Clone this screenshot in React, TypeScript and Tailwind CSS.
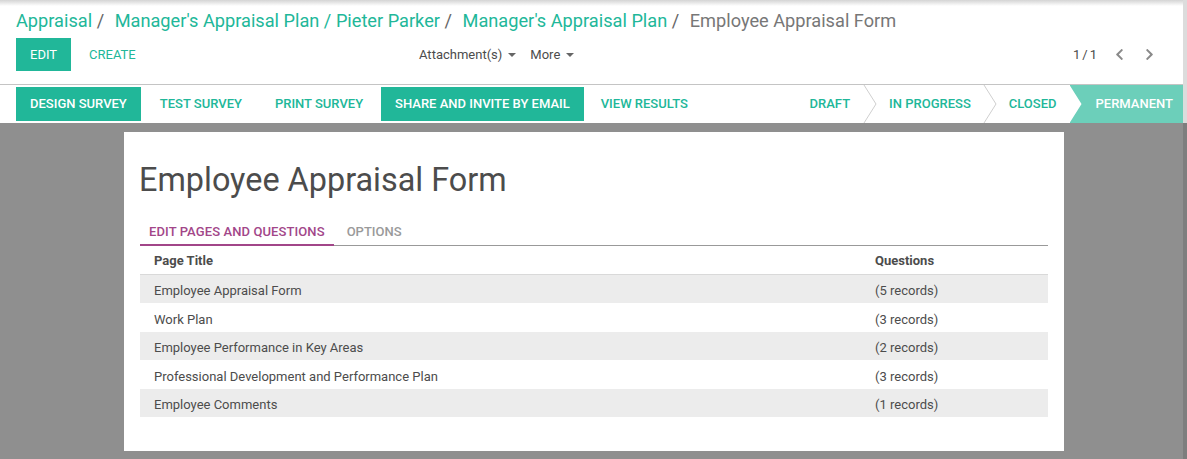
import { FaChevronLeft, FaChevronRight } from "react-icons/fa";

const rows = [
  { title: "Employee Appraisal Form", q: "(5 records)" },
  { title: "Work Plan", q: "(3 records)" },
  { title: "Employee Performance in Key Areas", q: "(2 records)" },
  { title: "Professional Development and Performance Plan", q: "(3 records)" },
  { title: "Employee Comments", q: "(1 records)" },
];

const Caret = () => <span className="inline-block ml-[6px] align-middle border-x-[4px] border-x-transparent border-t-[4px] border-t-[#666]" />;

const Sep = () => (
  <svg width="14" height="38" viewBox="0 0 14 38" className="shrink-0">
    <polyline points="1,0 13,19 1,38" fill="none" stroke="#cfcfcf" strokeWidth="1" />
  </svg>
);

const App = () => {
  return (
    <div className="flex w-[1187px] h-[459px] overflow-hidden bg-[#8f8f8f] font-['Roboto',sans-serif]">
      <div className="w-[1183px] shrink-0 flex flex-col">
        <div className="bg-white relative">
          <div className="absolute top-0 left-0 right-0 h-[6px] bg-gradient-to-b from-[#d4d4d4] to-white" />
          <div className="relative pt-[9px] pl-4 text-[18.2px] leading-[24px] whitespace-nowrap">
            <span className="text-[#21b799]">Appraisal</span>
            <span className="text-[#666]"> / </span>
            <span className="text-[#21b799] ml-[6px]">Manager's Appraisal Plan / Pieter Parker</span>
            <span className="text-[#666]"> / </span>
            <span className="text-[#21b799] ml-[6px]">Manager's Appraisal Plan</span>
            <span className="text-[#666]"> / </span>
            <span className="text-[#777] ml-[6px]">Employee Appraisal Form</span>
          </div>
          <div className="flex items-center h-[33px] mt-[5px] pl-4 pr-[27px] text-[13px]">
            <div className="w-[480px] flex items-center">
              <button className="bg-[#21b799] text-white h-[33px] px-[14px] uppercase">Edit</button>
              <button className="text-[#21b799] ml-[4px] px-[14px] uppercase">Create</button>
            </div>
            <div className="flex-1 flex items-center text-[#4c4c4c]">
              <span className="ml-[-77px]">Attachment(s)<Caret /></span>
              <span className="ml-[14px]">More<Caret /></span>
            </div>
            <div className="flex items-center text-[#4c4c4c]">
              <span>1<span className="mx-[2px]">/</span>1</span>
              <FaChevronLeft className="ml-[16px] text-[#8a8a8a]" size={13} />
              <FaChevronRight className="ml-[17px] text-[#8a8a8a]" size={13} />
            </div>
          </div>
          <div className="h-[13px]" />
        </div>
        <div className="bg-white border-t border-[#c4c4c4] h-[39px] flex items-stretch text-[13px] uppercase font-medium">
          <div className="flex items-center pl-4 gap-[4px] flex-1">
            <button className="bg-[#21b799] text-white h-[34px] px-[14px] uppercase">Design Survey</button>
            <button className="text-[#21b799] h-[34px] px-[15px] uppercase">Test Survey</button>
            <button className="text-[#21b799] h-[34px] px-[14px] uppercase">Print Survey</button>
            <button className="bg-[#21b799] text-white h-[34px] px-[14px] uppercase">Share and invite by email</button>
            <button className="text-[#21b799] h-[34px] px-[13px] uppercase">View Results</button>
          </div>
          <div className="flex items-center text-[#21b799]">
            <span className="px-[13px]">Draft</span>
            <Sep />
            <span className="px-[12px]">In Progress</span>
            <Sep />
            <span className="px-[12px]">Closed</span>
            <div className="h-full flex items-center bg-[#6ccfba] text-white pl-[26px] pr-[10px] ml-[1px] [clip-path:polygon(0_0,100%_0,100%_100%,0_100%,12px_50%)]">
              Permanent
            </div>
          </div>
        </div>
        <div className="flex-1 px-[124px] pt-[9px] pb-[8px]">
          <div className="bg-white w-[940px] h-[319px] px-4 pt-[28px]">
            <h1 className="text-[32.4px] leading-[40px] text-[#4c4c4c] ml-[-1px]">Employee Appraisal Form</h1>
            <div className="mt-[22px] flex text-[13px] uppercase border-b border-[#999]">
              <div className="px-[9px] pb-[2px] text-[#a24689] border-b-2 border-[#a24689] mb-[-1px] font-medium tracking-[0.1px]">Edit pages and questions</div>
              <div className="px-[13px] pb-[2px] text-[#9a9a9a] font-medium">Options</div>
            </div>
            <table className="w-full text-[13px] text-[#4c4c4c] mt-[1px]">
              <thead>
                <tr className="border-b border-[#d9d9d9] h-[28px]">
                  <th className="text-left font-bold pl-[14px] w-[721px]">Page Title</th>
                  <th className="text-left font-bold pl-[14px]">Questions</th>
                </tr>
              </thead>
              <tbody>
                {rows.map((r, i) => (
                  <tr key={r.title} className={`h-[28.6px] ${i % 2 === 0 ? "bg-[#ececec]" : "bg-white"}`}>
                    <td className="pl-[14px] pt-[4px]">{r.title}</td>
                    <td className="pl-[14px] pt-[4px]">{r.q}</td>
                  </tr>
                ))}
              </tbody>
            </table>
          </div>
        </div>
      </div>
      <div className="w-[4px] flex flex-col">
        <div className="h-[123px] bg-[#dcdcdc]" />
        <div className="flex-1 bg-[#7e7e7e]" />
      </div>
    </div>
  );
};

export default App;
